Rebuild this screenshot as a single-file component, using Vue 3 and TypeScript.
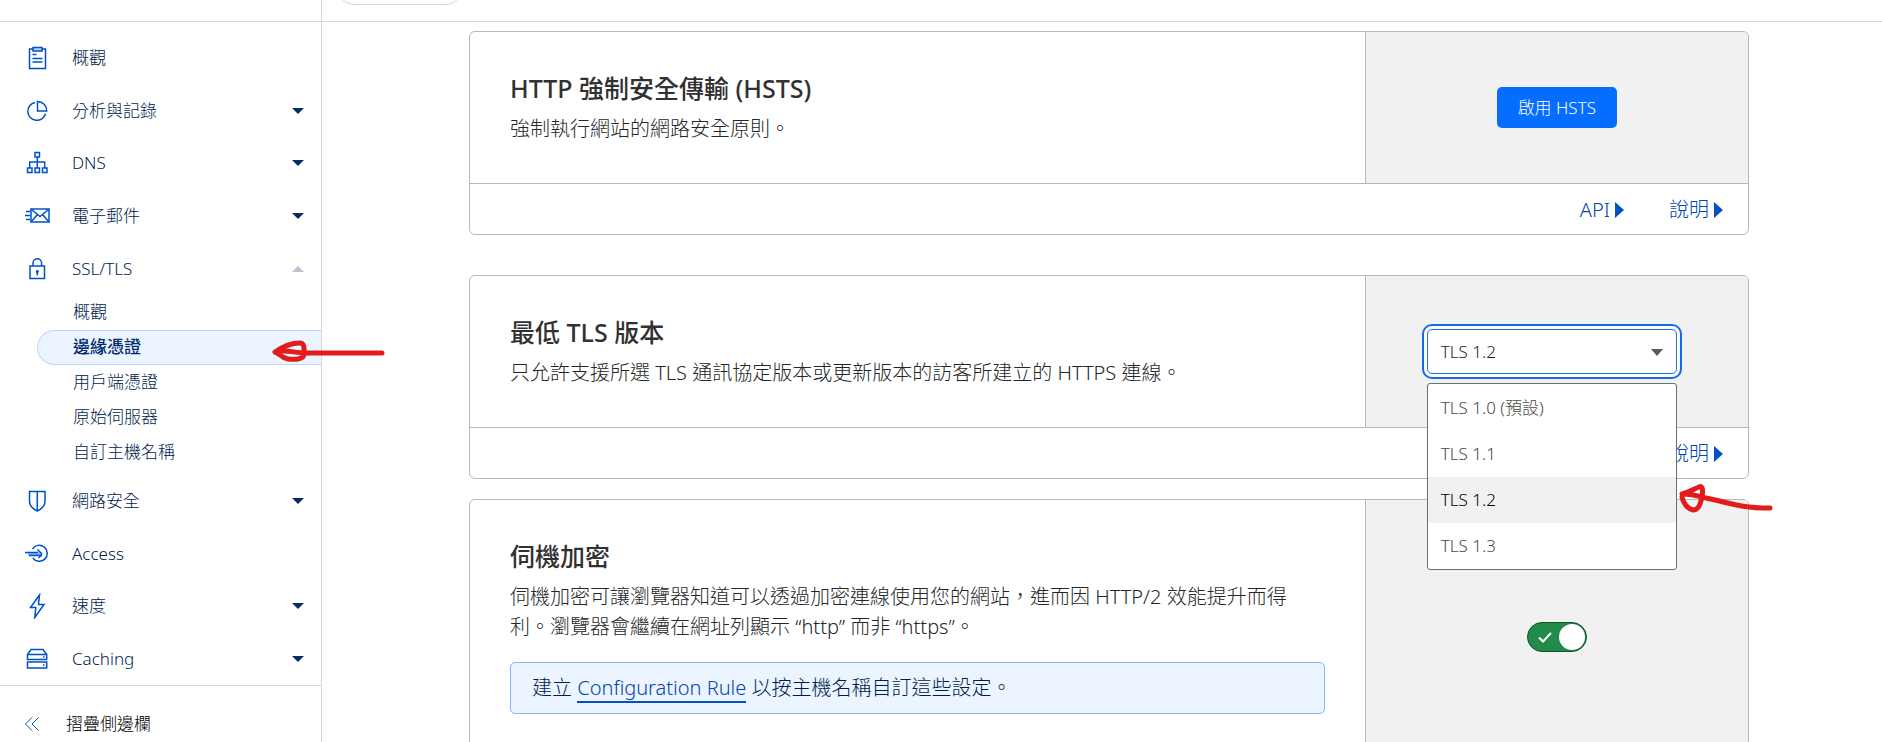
<script setup lang="ts">
import { ref } from 'vue'

type IconName =
  | 'clipboard' | 'pie' | 'network' | 'mail' | 'lock'
  | 'shield' | 'access' | 'bolt' | 'drive'

interface NavItem {
  label: string
  icon: IconName
  caret?: 'down' | 'up'
  children?: string[]
}

const navItems: NavItem[] = [
  { label: '概觀', icon: 'clipboard' },
  { label: '分析與記錄', icon: 'pie', caret: 'down' },
  { label: 'DNS', icon: 'network', caret: 'down' },
  { label: '電子郵件', icon: 'mail', caret: 'down' },
  {
    label: 'SSL/TLS',
    icon: 'lock',
    caret: 'up',
    children: ['概觀', '邊緣憑證', '用戶端憑證', '原始伺服器', '自訂主機名稱'],
  },
  { label: '網路安全', icon: 'shield', caret: 'down' },
  { label: 'Access', icon: 'access' },
  { label: '速度', icon: 'bolt', caret: 'down' },
  { label: 'Caching', icon: 'drive', caret: 'down' },
]

const activeChild = ref('邊緣憑證')
const versions = [
  { value: '1.0', label: 'TLS 1.0 (預設)' },
  { value: '1.1', label: 'TLS 1.1' },
  { value: '1.2', label: 'TLS 1.2' },
  { value: '1.3', label: 'TLS 1.3' },
]
const minVersion = ref('1.2')
const opportunistic = ref(true)
</script>

<template>
  <div class="shell">
    <aside class="sidebar">
      <div class="sidebar-top"></div>
      <nav class="nav" aria-label="主要導覽">
        <template v-for="item in navItems" :key="item.label">
          <a class="nav-item" href="#">
            <svg class="nav-icon" viewBox="0 0 26 26" aria-hidden="true">
              <g v-if="item.icon === 'clipboard'">
                <path d="M9 4H5.500v19.500h16V4H18" />
                <path class="tint" d="M9 2.500h9v3.500H9z" />
                <path d="M8.500 9.500h4M8.500 13.500h10M8.500 17h10" />
              </g>
              <g v-else-if="item.icon === 'pie'">
                <path d="M11 4.500a9 9 0 1 0 10.500 11.200" />
                <path d="M13.500 3.500v9.500h9.200a9.200 9.200 0 0 0-9.200-9.500z" />
              </g>
              <g v-else-if="item.icon === 'network'">
                <path d="M11 2.500h4.500v4.500H11zM3.500 18h4.500v4.500H3.500zM11 18h4.500v4.500H11zM18.500 18h4.500v4.500h-4.500z" />
                <path d="M13.300 7v11M5.700 18v-6h15v6" />
              </g>
              <g v-else-if="item.icon === 'mail'">
                <path d="M7 6h18v13H7z" />
                <path d="M7 6l9 7.500L25 6M7 19l6.500-7.500M25 19l-6.500-7.500" />
                <path d="M2 8.500h4M1 12.500h5M2 16.500h4" />
              </g>
              <g v-else-if="item.icon === 'lock'">
                <path d="M6 10h14.500v12.500H6z" />
                <path d="M9 10V7a4.300 4.300 0 0 1 8.600 0v3M13.300 16v3.500" />
                <circle class="solid" cx="13.300" cy="15.500" r="1.500" />
              </g>
              <g v-else-if="item.icon === 'shield'">
                <path d="M5.500 3.500H21V13c0 5-3.500 8-7.700 10C9 21 5.500 18 5.500 13zM13.300 3.500V23" />
              </g>
              <g v-else-if="item.icon === 'access'">
                <path class="tint-fill" d="M4 11.500h14v3H4z" />
                <path d="M8.500 8a8 8 0 1 1 .300 9" />
                <path d="M1 11.500h13M5 14.500h13" />
                <path d="M13.500 8.500l4.500 4.500M18 13.500L14.500 17" />
              </g>
              <g v-else-if="item.icon === 'bolt'">
                <path d="M15.500 2L6.500 14.500h5.300l-1 10L20 11.500h-5.500z" />
              </g>
              <g v-else>
                <path d="M3.500 8.500L7 3.500h12l3.700 5v5H3.500zM3.500 8.500h19M3.500 16h19.200v6H3.500z" />
                <path d="M19 11h1.500M19 19h1.500" />
              </g>
            </svg>
            <span class="nav-label">{{ item.label }}</span>
            <svg v-if="item.caret" class="caret" :class="item.caret" viewBox="0 0 12 6" aria-hidden="true">
              <path d="M0 0h12L6 6z" />
            </svg>
          </a>
          <ul v-if="item.children" class="subnav">
            <li v-for="child in item.children" :key="child">
              <a
                class="sub-item"
                :class="{ active: child === activeChild }"
                href="#"
                @click.prevent="activeChild = child"
              >{{ child }}</a>
              <svg v-if="child === '邊緣憑證'" class="marker marker-nav" viewBox="0 0 114 26" aria-hidden="true">
                <path d="M3 12C13 5 21 3 28 3C33 3 32 10 32 14C32 19 24 20 16 19C9 18 7 13 3 12C14 9 22 13 34 13H110" />
              </svg>
            </li>
          </ul>
        </template>
      </nav>
      <button class="collapse" type="button">
        <svg class="collapse-icon" viewBox="0 0 16 16" aria-hidden="true">
          <path d="M8 1.500L1.500 8 8 14.500M14.500 1.500L8 8l6.500 6.500" />
        </svg>
        <span>摺疊側邊欄</span>
      </button>
    </aside>

    <div class="page">
      <header class="topbar"><span class="pill"></span></header>
      <main class="content">
        <section class="card">
          <div class="card-body">
            <div class="card-text">
              <h2>HTTP 強制安全傳輸 (HSTS)</h2>
              <p>強制執行網站的網路安全原則。</p>
            </div>
            <div class="card-control">
              <button class="primary" type="button">啟用 HSTS</button>
            </div>
          </div>
          <footer class="card-footer">
            <a href="#">API<svg viewBox="0 0 9 16" aria-hidden="true"><path d="M0 0l9 8-9 8z" /></svg></a>
            <a href="#">說明<svg viewBox="0 0 9 16" aria-hidden="true"><path d="M0 0l9 8-9 8z" /></svg></a>
          </footer>
        </section>

        <section class="card tls">
          <div class="card-body">
            <div class="card-text">
              <h2 id="tls-title">最低 TLS 版本</h2>
              <p>只允許支援所選 TLS 通訊協定版本或更新版本的訪客所建立的 HTTPS 連線。</p>
            </div>
            <div class="card-control">
              <div class="dropdown">
                <select v-model="minVersion" class="select" aria-labelledby="tls-title">
                  <option v-for="v in versions" :key="v.value" :value="v.value">{{ v.label }}</option>
                </select>
                <svg class="select-caret" viewBox="0 0 12 7" aria-hidden="true"><path d="M0 0h12L6 7z" /></svg>
                <ul class="menu" role="listbox" aria-labelledby="tls-title">
                  <li
                    v-for="v in versions"
                    :key="v.value"
                    role="option"
                    :aria-selected="v.value === minVersion"
                    :class="{ selected: v.value === minVersion }"
                    @click="minVersion = v.value"
                  >{{ v.label }}</li>
                </ul>
                <svg class="marker marker-menu" viewBox="0 0 96 32" aria-hidden="true">
                  <path d="M4 11C12 9 18 5 21 4C25 2 25 8 24 13C23 20 21 27 15 27C9 26 5 19 4 14M4 11C14 11 20 13 28 15C52 20 62 25 92 25" />
                </svg>
              </div>
            </div>
          </div>
          <footer class="card-footer">
            <a href="#">說明<svg viewBox="0 0 9 16" aria-hidden="true"><path d="M0 0l9 8-9 8z" /></svg></a>
          </footer>
        </section>

        <section class="card">
          <div class="card-body">
            <div class="card-text">
              <h2 id="opp-title">伺機加密</h2>
              <p>伺機加密可讓瀏覽器知道可以透過加密連線使用您的網站，進而因 HTTP/2 效能提升而得利。瀏覽器會繼續在網址列顯示 “http” 而非 “https”。</p>
              <div class="notice">建立 <a href="#">Configuration Rule</a> 以按主機名稱自訂這些設定。</div>
            </div>
            <div class="card-control">
              <label class="toggle">
                <input v-model="opportunistic" type="checkbox" role="switch" aria-labelledby="opp-title" />
                <svg class="check" viewBox="0 0 14 11" aria-hidden="true"><path d="M1 5.500L5 9.500 13 1" /></svg>
                <span class="knob"></span>
              </label>
            </div>
          </div>
        </section>
      </main>
    </div>
  </div>
</template>

<style>
html,
body {
  margin: 0;
  background: #fff;
}
</style>

<style scoped>
* {
  box-sizing: border-box;
}

.shell {
  display: grid;
  grid-template-columns: 322px minmax(0, 1fr);
  grid-template-rows: minmax(0, 1fr);
  height: 100vh;
  overflow: hidden;
  color: #242628;
  font-family: "Noto Sans", "Noto Sans CJK TC", sans-serif;
  font-size: 20px;
  font-weight: 300;
  line-height: 30px;
}

a {
  color: #0046b0;
  text-decoration: none;
}

button,
select {
  font: inherit;
}

/* Sidebar */
.sidebar {
  position: relative;
  z-index: 2;
  display: flex;
  flex-direction: column;
  border-right: 1px solid #d5d7d8;
  font-size: 17px;
}

.sidebar-top {
  flex: none;
  height: 22px;
  border-bottom: 1px solid #d5d7d8;
}

.nav {
  flex: 1;
  display: flex;
  flex-direction: column;
  padding-top: 10px;
}

.nav-item {
  flex: 1;
  display: flex;
  align-items: center;
  padding: 0 17px 0 24px;
  color: #001c4d;
}

.nav-icon {
  flex: none;
  width: 26px;
  height: 26px;
  margin-right: 22px;
  fill: none;
  stroke: #0051c3;
  stroke-width: 1.5;
}

.nav-icon .tint {
  fill: #b9d6ff;
}

.nav-icon .tint-fill {
  fill: #82b6ff;
  stroke: none;
}

.nav-icon .solid {
  fill: #0051c3;
  stroke: none;
}

.nav-label {
  flex: 1;
}

.caret {
  width: 12px;
  height: 6px;
  fill: #062b66;
}

.caret.up {
  transform: rotate(180deg);
  fill: #bcc4d0;
}

.subnav {
  flex: none;
  margin: 0 0 5px;
  padding: 0 0 0 37px;
  list-style: none;
}

.subnav li {
  position: relative;
}

.sub-item {
  display: flex;
  align-items: center;
  height: 35px;
  padding-left: 35px;
  border: 1px solid transparent;
  border-right: 0;
  border-radius: 18px 0 0 18px;
  color: #001c4d;
}

.sub-item.active {
  border-color: #b9d6ff;
  background: #ebf4ff;
  color: #002b6b;
  font-weight: 500;
}

.marker {
  position: absolute;
  fill: none;
  stroke: #e21b1b;
  stroke-width: 5;
  stroke-linecap: round;
  stroke-linejoin: round;
  pointer-events: none;
}

.marker-nav {
  top: 10px;
  left: 235px;
  width: 114px;
  height: 26px;
}

.collapse {
  flex: none;
  display: flex;
  align-items: center;
  gap: 26px;
  height: 57px;
  padding: 20px 24px 0;
  border: 0;
  border-top: 1px solid #d5d7d8;
  background: none;
  color: #000;
}

.collapse-icon {
  width: 16px;
  height: 16px;
  fill: none;
  stroke: #0051c3;
  stroke-width: 1;
}

/* Page */
.page {
  min-width: 0;
}

.topbar {
  display: flex;
  height: 22px;
  border-bottom: 1px solid #d5d7d8;
}

.pill {
  width: 128px;
  height: 38px;
  margin: -33px 0 0 14px;
  border: 1px solid #d5d7d8;
  border-radius: 19px;
}

.content {
  display: flex;
  flex-direction: column;
  padding: 9px 133px 0 147px;
}

.card {
  margin-bottom: 40px;
  border: 1px solid #b6b7b8;
  border-radius: 6px;
}

.card.tls {
  margin-bottom: 20px;
}

.card-body {
  display: grid;
  grid-template-columns: 7fr 3fr;
}

.card-text {
  padding: 40px 40px 39px;
}

h2 {
  margin: 0 0 10px;
  color: #313131;
  font-size: 25px;
  font-weight: 500;
  line-height: 32px;
}

p {
  margin: 0;
}

.card-control {
  display: flex;
  align-items: center;
  justify-content: center;
  border-left: 1px solid #b6b7b8;
  border-radius: 0 5px 0 0;
  background: #f1f1f1;
}

.card-footer {
  display: flex;
  justify-content: flex-end;
  gap: 45px;
  padding: 11px 25px 9px;
  border-top: 1px solid #b6b7b8;
}

.card-footer a {
  display: flex;
  align-items: center;
  gap: 5px;
}

.card-footer svg {
  width: 9px;
  height: 16px;
  fill: #0051c3;
}

.primary {
  height: 41px;
  padding: 0 21px;
  border: 0;
  border-radius: 5px;
  background: #056dff;
  color: #fff;
  font-size: 17px;
}

.dropdown {
  position: relative;
  width: 250px;
  margin-right: 10px;
  font-size: 17px;
}

.select {
  display: block;
  width: 100%;
  height: 45px;
  padding: 0 13px;
  border: 1px solid #1a6fe0;
  border-radius: 5px;
  outline: 2px solid #176bea;
  outline-offset: 3px;
  box-shadow: 0 0 0 3px #fff;
  background: #fff;
  color: #1d1d1d;
  appearance: none;
}

.select-caret {
  position: absolute;
  top: 20px;
  right: 14px;
  width: 12px;
  height: 7px;
  fill: #595959;
  pointer-events: none;
}

.menu {
  position: absolute;
  z-index: 1;
  top: 54px;
  left: 0;
  width: 100%;
  margin: 0;
  padding: 1px 0 0;
  border: 1px solid #6e6e6e;
  border-radius: 3px;
  background: #fff;
  color: #4a4a4a;
  line-height: 46px;
  list-style: none;
}

.menu li {
  padding: 0 13px;
}

.menu .selected {
  background: #f1f1f1;
  color: #000;
}

.marker-menu {
  z-index: 2;
  top: 154px;
  left: 251px;
  width: 96px;
  height: 32px;
}

.notice {
  margin: 20px 0;
  padding: 10px 21px;
  border: 1px solid #82b6ff;
  border-radius: 5px;
  background: #ebf4ff;
  color: #001c4d;
}

.notice a {
  border-bottom: 2px solid #0051c3;
}

.toggle {
  position: relative;
  display: block;
  width: 60px;
  height: 30px;
}

.toggle input {
  display: block;
  width: 100%;
  height: 100%;
  margin: 0;
  border: 1px solid #0f5026;
  border-radius: 15px;
  background: #228b49;
  appearance: none;
}

.check {
  position: absolute;
  top: 10px;
  left: 11px;
  width: 14px;
  height: 11px;
  fill: none;
  stroke: #fff;
  stroke-width: 2;
  pointer-events: none;
}

.knob {
  position: absolute;
  top: 2px;
  right: 2px;
  width: 26px;
  height: 26px;
  border-radius: 50%;
  background: #fff;
  pointer-events: none;
}
</style>
